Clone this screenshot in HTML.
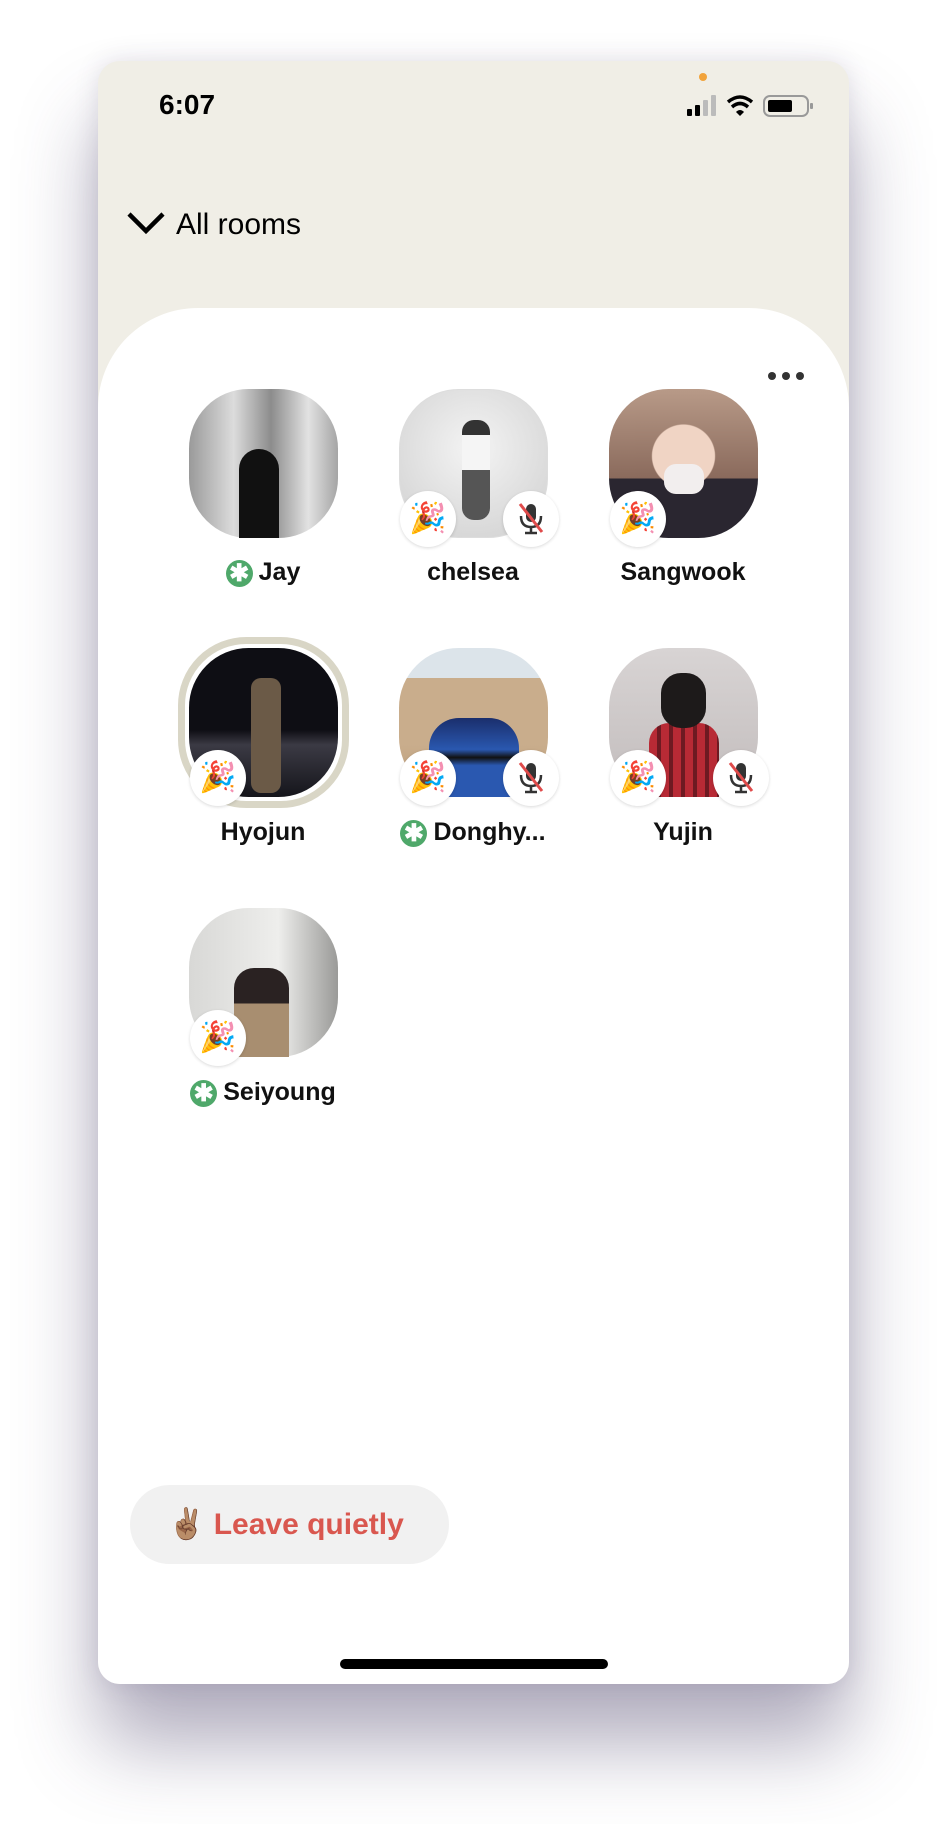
<!DOCTYPE html>
<html><head><meta charset="utf-8">
<style>
*{margin:0;padding:0;box-sizing:border-box}
body{width:950px;height:1824px;background:#fff;position:relative;overflow:hidden;font-family:"Liberation Sans",sans-serif}
.phone{position:absolute;left:98px;top:61px;width:751px;height:1623px;border-radius:22px;background:#f0eee6;overflow:hidden;box-shadow:0 60px 80px rgba(70,60,100,.42),0 0 24px rgba(80,70,110,.15)}
.time{position:absolute;left:61px;top:28px;font-size:28px;font-weight:bold;color:#000}
.dot{position:absolute;left:601px;top:12px;width:8px;height:8px;border-radius:50%;background:#f1a33b}
.sheet{position:absolute;left:0;top:247px;width:751px;height:1400px;background:#fff;border-radius:100px 100px 0 0}
.back{position:absolute;left:28px;top:147px;font-size:30px;color:#000}
.more{position:absolute;left:670px;top:306px}
.more i{display:inline-block;width:8px;height:8px;border-radius:50%;background:#333;margin-right:6px}
.av{position:absolute;width:149px;height:149px;border-radius:40%}
.name{position:absolute;width:220px;text-align:center;font-size:25px;font-weight:bold;color:#111}
.badge{position:absolute;width:56px;height:56px;border-radius:50%;background:#fff;box-shadow:0 1px 3px rgba(0,0,0,.15);text-align:center;line-height:56px;font-size:30px}
.star{display:inline-block;width:27px;height:27px;border-radius:50%;background:#4fa86a;color:#fff;font-size:24px;line-height:28px;text-align:center;vertical-align:-1px;margin-right:6px}
.leave{position:absolute;left:32px;top:1424px;width:319px;height:79px;border-radius:40px;background:#f1f1f1;font-size:30px;font-weight:bold;color:#d9574f;line-height:79px;padding-left:38px}
.home{position:absolute;left:242px;top:1598px;width:268px;height:10px;border-radius:5px;background:#000}
</style></head><body>
<div class="phone">
 <div class="dot"></div>
 <div class="time">6:07</div>
 <svg style="position:absolute;left:589px;top:33px" width="136" height="24" viewBox="0 0 136 24">
  <rect x="0" y="15" width="5" height="7" rx="1" fill="#000"/><rect x="8" y="11" width="5" height="11" rx="1" fill="#000"/><rect x="16" y="6" width="5" height="16" rx="1" fill="#bbb"/><rect x="24" y="1" width="5" height="21" rx="1" fill="#bbb"/>
  <path d="M41 8 Q53 -2 65 8" stroke="#000" stroke-width="3.5" fill="none"/><path d="M45 13 Q53 6 61 13" stroke="#000" stroke-width="3.5" fill="none"/><path d="M49 18 L53 22 L57 18 Q53 14 49 18Z" fill="#000"/>
  <rect x="77" y="2" width="44" height="20" rx="6" fill="none" stroke="#999" stroke-width="2"/><rect x="81" y="6" width="24" height="12" rx="2" fill="#000"/><rect x="123" y="9" width="3" height="6" rx="1" fill="#999"/>
 </svg>
 <div class="back"><svg width="40" height="26" viewBox="0 0 40 26" style="vertical-align:-2px;margin-right:10px"><path d="M3 4 L20 21 L37 4" stroke="#000" stroke-width="4.5" fill="none"/></svg>All rooms</div>
 <div class="sheet"></div>
 <div class="more"><i></i><i></i><i></i></div>

 <div class="av" style="left:91px;top:328px;background:linear-gradient(90deg,#9a9a9a,#dcdcdc 30%,#8c8c8c 55%,#e2e2e2 80%,#a5a5a5)"><div style="position:absolute;left:50px;top:60px;width:40px;height:89px;border-radius:20px 20px 0 0;background:#111"></div></div>
 <div class="name" style="left:55px;top:497px"><span class="star">✱</span>Jay</div>

 <div class="av" style="left:301px;top:328px;background:radial-gradient(circle at 50% 40%,#f4f4f4,#cfcfcf);border:1px solid #ddd"><div style="position:absolute;left:62px;top:30px;width:28px;height:100px;border-radius:12px;background:linear-gradient(#333 0 15%,#f5f5f5 15% 50%,#555 50%)"></div></div>
 <div class="badge" style="left:302px;top:430px">🎉</div>
 <div class="badge" style="left:405px;top:430px"><svg width="30" height="34" viewBox="0 0 30 34" style="margin-top:11px"><rect x="10" y="2" width="10" height="18" rx="5" fill="#333"/><path d="M5 14 Q5 25 15 25 Q25 25 25 14" stroke="#333" stroke-width="2.5" fill="none"/><path d="M15 25 V31 M9 31 H21" stroke="#333" stroke-width="2.5"/><path d="M4 2 L26 30" stroke="#e04b4b" stroke-width="3"/></svg></div>
 <div class="name" style="left:265px;top:497px">chelsea</div>

 <div class="av" style="left:511px;top:328px;background:radial-gradient(circle at 50% 45%,#f0d4c4 0 28%,transparent 29%),linear-gradient(#b89a88,#8a6a5c 60%,#2a2630 60%)"><div style="position:absolute;left:55px;top:75px;width:40px;height:30px;border-radius:12px;background:#f2eeee"></div></div>
 <div class="badge" style="left:512px;top:430px">🎉</div>
 <div class="name" style="left:475px;top:497px">Sangwook</div>

 <div class="av" style="left:80px;top:576px;width:171px;height:171px;border:7px solid #d9d6c6;background:#fff"></div>
 <div class="av" style="left:91px;top:587px;background:linear-gradient(#0e0e14 0 55%,#3b3a44 65%,#15151b)"><div style="position:absolute;left:62px;top:30px;width:30px;height:115px;border-radius:10px;background:#6b5a47"></div></div>
 <div class="badge" style="left:92px;top:689px">🎉</div>
 <div class="name" style="left:55px;top:757px">Hyojun</div>

 <div class="av" style="left:301px;top:587px;background:linear-gradient(#dce4ea 0 20%,#c9ad8c 20% 65%,#b99a78)"><div style="position:absolute;left:30px;top:70px;width:90px;height:79px;border-radius:30px 30px 0 0;background:linear-gradient(#1a2e6c,#2a58b0 40%,#111 50%,#2a58b0 60%)"></div></div>
 <div class="badge" style="left:302px;top:689px">🎉</div>
 <div class="badge" style="left:405px;top:689px"><svg width="30" height="34" viewBox="0 0 30 34" style="margin-top:11px"><rect x="10" y="2" width="10" height="18" rx="5" fill="#333"/><path d="M5 14 Q5 25 15 25 Q25 25 25 14" stroke="#333" stroke-width="2.5" fill="none"/><path d="M15 25 V31 M9 31 H21" stroke="#333" stroke-width="2.5"/><path d="M4 2 L26 30" stroke="#e04b4b" stroke-width="3"/></svg></div>
 <div class="name" style="left:265px;top:757px"><span class="star">✱</span>Donghy...</div>

 <div class="av" style="left:511px;top:587px;background:linear-gradient(#d8d4d4,#c2bcbc)"><div style="position:absolute;left:40px;top:75px;width:70px;height:74px;border-radius:20px 20px 0 0;background:repeating-linear-gradient(90deg,#b82a35 0 8px,#6e1a22 8px 12px)"></div><div style="position:absolute;left:52px;top:25px;width:45px;height:55px;border-radius:20px;background:#1d1a1a"></div></div>
 <div class="badge" style="left:512px;top:689px">🎉</div>
 <div class="badge" style="left:615px;top:689px"><svg width="30" height="34" viewBox="0 0 30 34" style="margin-top:11px"><rect x="10" y="2" width="10" height="18" rx="5" fill="#333"/><path d="M5 14 Q5 25 15 25 Q25 25 25 14" stroke="#333" stroke-width="2.5" fill="none"/><path d="M15 25 V31 M9 31 H21" stroke="#333" stroke-width="2.5"/><path d="M4 2 L26 30" stroke="#e04b4b" stroke-width="3"/></svg></div>
 <div class="name" style="left:475px;top:757px">Yujin</div>

 <div class="av" style="left:91px;top:847px;background:linear-gradient(90deg,#d8d8d6,#eeeeec 60%,#9a9a98)"><div style="position:absolute;left:45px;top:60px;width:55px;height:89px;border-radius:20px 20px 0 0;background:linear-gradient(#2a2222 0 40%,#a88e70 40%)"></div></div>
 <div class="badge" style="left:92px;top:949px">🎉</div>
 <div class="name" style="left:55px;top:1017px"><span class="star">✱</span>Seiyoung</div>

 <div class="leave">✌🏽 Leave quietly</div>
 <div class="home"></div>
</div>
</body></html>
